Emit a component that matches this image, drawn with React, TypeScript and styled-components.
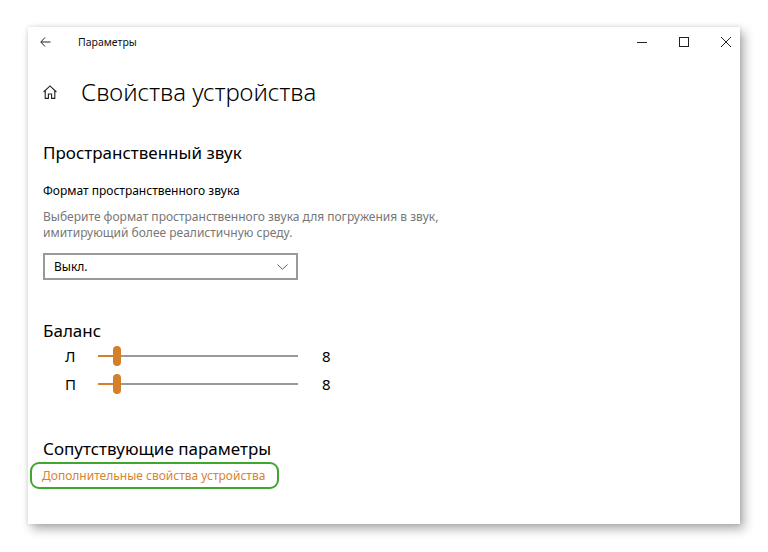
import React from "react";
import styled, { createGlobalStyle } from "styled-components";

const Global = createGlobalStyle`
  html, body { margin: 0; padding: 0; background: #ffffff; }
  body { font-family: "Noto Sans", "Open Sans", sans-serif; color: #000; }
  #root { width: 768px; height: 552px; overflow: hidden; }
`;

const Page = styled.div`
  width: 768px;
  height: 552px;
  padding: 27px 0 0 28px;
  box-sizing: border-box;
`;

const Window = styled.div`
  width: 712px;
  height: 497px;
  background: #fff;
  box-shadow: 4px 5px 10px rgba(0, 0, 0, 0.32), 0 0 4px rgba(0, 0, 0, 0.12);
  display: flex;
  flex-direction: column;
`;

const TitleBar = styled.div`
  height: 30px;
  display: flex;
  align-items: center;
`;

const BackButton = styled.div`
  width: 50px;
  height: 30px;
  display: flex;
  align-items: center;
  padding-left: 12px;
  box-sizing: border-box;
`;

const TitleText = styled.div`
  font-size: 10.5px;
  color: #111;
  flex: 1;
`;

const Controls = styled.div`
  display: flex;
  align-items: center;
  gap: 32px;
  margin-right: 9px;
`;

const Ctl = styled.div`
  width: 10px;
  height: 10px;
  display: flex;
`;

const Content = styled.div`
  padding-left: 15px;
  display: flex;
  flex-direction: column;
  align-items: flex-start;
`;

const HeaderRow = styled.div`
  margin-top: 17px;
  height: 36px;
  display: flex;
  align-items: center;
  gap: 24px;
`;

const PageTitle = styled.h1`
  margin: 0;
  font-size: 24px;
  font-weight: 300;
  line-height: 36px;
`;

const SectionTitle = styled.h2<{ $mt: number; $lh?: number }>`
  margin: ${(p) => p.$mt}px 0 0;
  font-size: 17px;
  font-weight: 400;
  line-height: ${(p) => p.$lh ?? 26}px;
`;

const FieldLabel = styled.div`
  margin-top: 15px;
  font-size: 12px;
  line-height: 20px;
`;

const Description = styled.div`
  margin-top: 8px;
  font-size: 12px;
  line-height: 16px;
  color: #777;
`;

const Dropdown = styled.div`
  margin-top: 12px;
  width: 255px;
  height: 27px;
  box-sizing: border-box;
  border: 2px solid #999;
  display: flex;
  align-items: center;
  justify-content: space-between;
  padding: 0 8px 0 9px;
  font-size: 12px;
`;

const SliderRow = styled.div`
  height: 28px;
  display: flex;
  align-items: center;
  padding-left: 22px;
`;

const SliderLabel = styled.div`
  width: 33px;
  font-size: 15px;
`;

const Track = styled.div`
  position: relative;
  width: 200px;
  height: 2px;
  background: #999;
`;

const TrackFill = styled.div`
  position: absolute;
  left: 0;
  top: 0;
  height: 2px;
  background: #d47f2a;
`;

const Thumb = styled.div`
  position: absolute;
  top: -9px;
  width: 8px;
  height: 20px;
  border-radius: 4px;
  background: #d47f2a;
`;

const SliderValue = styled.div`
  margin-left: 24px;
  font-size: 15px;
`;

const LinkBox = styled.div`
  margin-left: -13px;
  width: 249px;
  height: 27px;
  box-sizing: border-box;
  border: 2.5px solid #3ea72d;
  border-radius: 9px;
  display: flex;
  align-items: center;
  padding-left: 10px;
`;

const Link = styled.a`
  color: #d7842f;
  font-size: 12px;
  text-decoration: none;
`;

const Balance = ({ label, value }: { label: string; value: number }) => {
  const pos = 19;
  return (
    <SliderRow>
      <SliderLabel>{label}</SliderLabel>
      <Track>
        <TrackFill style={{ width: pos }} />
        <Thumb style={{ left: pos - 4 }} />
      </Track>
      <SliderValue>{value}</SliderValue>
    </SliderRow>
  );
};

export default function App() {
  return (
    <>
      <Global />
      <Page>
        <Window>
          <TitleBar>
            <BackButton>
              <svg width="11" height="10" viewBox="0 0 11 10" fill="none" stroke="#222" strokeWidth="1">
                <path d="M10.5 5H1M5 0.5L0.8 5L5 9.5" />
              </svg>
            </BackButton>
            <TitleText>Параметры</TitleText>
            <Controls>
              <Ctl>
                <svg width="10" height="10" viewBox="0 0 10 10" fill="none" stroke="#222" strokeWidth="1">
                  <path d="M0 5.5H10" />
                </svg>
              </Ctl>
              <Ctl>
                <svg width="10" height="10" viewBox="0 0 10 10" fill="none" stroke="#222" strokeWidth="1">
                  <rect x="0.5" y="0.5" width="9" height="9" />
                </svg>
              </Ctl>
              <Ctl>
                <svg width="10" height="10" viewBox="0 0 10 10" fill="none" stroke="#222" strokeWidth="1">
                  <path d="M0 0L10 10M10 0L0 10" />
                </svg>
              </Ctl>
            </Controls>
          </TitleBar>
          <Content>
            <HeaderRow>
              <svg width="14" height="14" viewBox="0 0 14 14" fill="none" stroke="#222" strokeWidth="1.1">
                <path d="M0.6 7L7 0.9L13.4 7" />
                <path d="M2.2 5.5V13.4H5.4V9H8.6V13.4H11.8V5.5" />
              </svg>
              <PageTitle>Свойства устройства</PageTitle>
            </HeaderRow>
            <SectionTitle $mt={30}>Пространственный звук</SectionTitle>
            <FieldLabel>Формат пространственного звука</FieldLabel>
            <Description>
              Выберите формат пространственного звука для погружения в звук,
              <br />
              имитирующий более реалистичную среду.
            </Description>
            <Dropdown>
              <span>Выкл.</span>
              <svg width="11" height="6" viewBox="0 0 11 6" fill="none" stroke="#666" strokeWidth="1">
                <path d="M0.5 0.5L5.5 5.3L10.5 0.5" />
              </svg>
            </Dropdown>
            <SectionTitle $mt={40} $lh={22}>Баланс</SectionTitle>
            <Balance label="Л" value={8} />
            <Balance label="П" value={8} />
            <SectionTitle $mt={38}>Сопутствующие параметры</SectionTitle>
            <LinkBox>
              <Link href="#">Дополнительные свойства устройства</Link>
            </LinkBox>
          </Content>
        </Window>
      </Page>
    </>
  );
}
